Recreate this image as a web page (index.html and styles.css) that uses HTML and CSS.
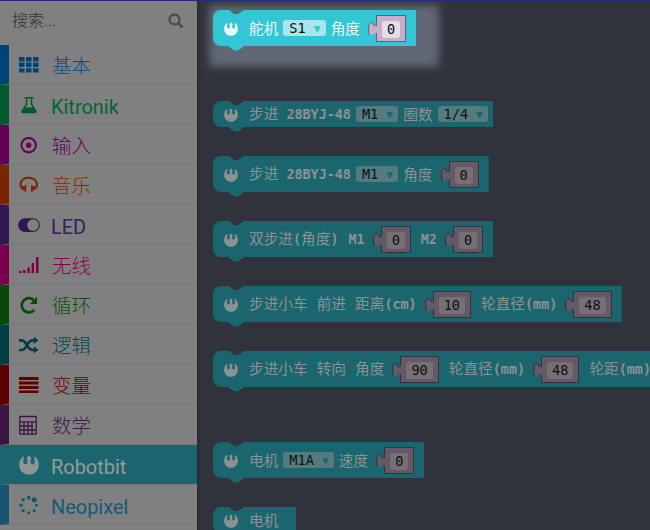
FILE: index.html
```
<!DOCTYPE html>
<html lang="zh-CN">
<head>
<meta charset="utf-8">
<title>Robotbit</title>
<link rel="stylesheet" href="styles.css">
</head>
<body>
<svg class="defs" width="0" height="0">
  <symbol id="rebel" viewBox="0 0 20 20"><path d="M4.600 1.200C1.500 3.200 .2 6.500 .2 10C.2 15.500 4.500 19.700 10 19.700S19.800 15.500 19.800 10C19.800 6.500 18.500 3.200 15.400 1.200C14.300 3.200 16.500 5.500 15.600 8C14.800 9.800 12.300 9.800 11.800 8C11.500 6.800 11.700 5 11.800 3.700L13.200 4.300L10 .2L6.800 4.300L8.200 3.700C8.300 5 8.500 6.800 8.200 8C7.700 9.800 5.200 9.800 4.400 8C3.500 5.500 5.700 3.200 4.600 1.200Z"/></symbol>
  <symbol id="notch" viewBox="0 0 16 5"><path d="M0 0H16L11 4Q10.500 4.400 9.800 4.400H6.800Q6 4.400 5.500 4Z"/></symbol>
  <symbol id="tab" viewBox="0 0 10 16"><path d="M10 4.500H7.500Q5.500 4.500 5 2.800Q4.300 .8 2.500 1.600Q.5 2.600 .5 7.800Q.5 13.200 2.200 14.200Q4 14.900 5 13.200Q5.500 12 7.500 12H10Z" stroke="none"/><path d="M9 4.500H7.500Q5.500 4.500 5 2.800Q4.300 .8 2.500 1.600Q.5 2.600 .5 7.800Q.5 13.200 2.200 14.200" fill="none"/></symbol>
</svg>
<div class="app">
  <nav class="toolbox">
    <div class="search"><span>搜索...</span>
      <svg width="16" height="16" viewBox="0 0 16 16"><circle cx="6.500" cy="6.500" r="5" fill="none" stroke="currentColor" stroke-width="2.300"/><path d="M10.200 10.200L14.500 14.500" stroke="currentColor" stroke-width="2.600"/></svg>
    </div>
    <div class="cat basic"><svg viewBox="0 0 20 20"><path d="M0 2h5.500v4.400H0zM7 2h5.500v4.400H7zM14 2h5.500v4.400H14zM0 7.600h5.500V12H0zM7 7.600h5.500V12H7zM14 7.600h5.500V12H14zM0 13.200h5.500v4.300H0zM7 13.200h5.500v4.300H7zM14 13.200h5.500v4.300H14z"/></svg><span>基本</span></div>
    <div class="cat kitronik"><svg viewBox="0 0 20 20"><path fill-rule="evenodd" d="M5.500 2h9v1.400h-1.300V9l4.300 6.800Q18.500 18.300 16 18.300H4Q1.500 18.300 2.500 15.800L6.800 9V3.400H5.500ZM8.300 3.400V9.500L6.300 12.500H13.700L11.700 9.500V3.400Z"/></svg><span class="latin">Kitronik</span></div>
    <div class="cat input"><svg viewBox="0 0 20 20"><circle cx="9.700" cy="10.200" r="7.200" fill="none" stroke="currentColor" stroke-width="2.100"/><circle cx="9.700" cy="10.200" r="2.700"/></svg><span>输入</span></div>
    <div class="cat music"><svg viewBox="0 0 20 20"><path d="M3 13.500C-.8 8 3.500 2.800 9.700 2.800S20.300 8 16.500 13.500" fill="none" stroke="currentColor" stroke-width="2"/><path d="M7.300 9.800V17H6.100V16Q3 15.500 2.500 13Q3 10.700 6.100 10.700V9.800ZM12.100 9.800V17H13.300V16Q16.400 15.500 17 13Q16.400 10.700 13.300 10.700V9.800Z"/></svg><span>音乐</span></div>
    <div class="cat led"><svg class="wide" viewBox="0 0 22 20"><path fill-rule="evenodd" d="M7 3.200H15A6.900 6.900 0 0 1 15 17H7A6.900 6.900 0 0 1 7 3.200ZM15 4.300A5.800 5.800 0 1 0 15 15.900A5.800 5.800 0 1 0 15 4.300Z"/></svg><span class="latin">LED</span></div>
    <div class="cat radio"><svg viewBox="0 0 20 20"><path d="M0 16h2.500v2H0zM4 15h2.500v3H4zM8.300 12.500h2.500V18H8.300zM12.600 8h2.500v10h-2.500zM17 2h2.500v16H17z"/></svg><span>无线</span></div>
    <div class="cat loops"><svg viewBox="0 0 20 20"><path d="M15.200 15A7.100 7.100 0 1 1 14.600 5" fill="none" stroke="currentColor" stroke-width="2.700"/><path d="M18 1.800V9H10.800Z"/></svg><span>循环</span></div>
    <div class="cat logic"><svg viewBox="0 0 20 20"><path d="M0 5.300H2.500C8 5.300 8 15 13.500 15H16M0 15H2.500C8 15 8 5.300 13.500 5.300H16" fill="none" stroke="currentColor" stroke-width="2.700"/><path d="M14.800 1.800L19.500 5.300L14.800 9ZM14.800 11.300L19.500 15L14.800 18.500Z"/></svg><span>逻辑</span></div>
    <div class="cat variables"><svg viewBox="0 0 20 20"><path d="M0 2h19.500v3H0zM0 6.500h19.500v3H0zM0 11h19.500v3H0zM0 15.500h19.500v2.500H0z"/></svg><span>变量</span></div>
    <div class="cat math"><svg viewBox="0 0 20 20"><path d="M.8 1.500H17.200V19.200H.8ZM1 6.800H17M1 11H14M1 15H17M5 7V19M9 7V19M13 7V19" fill="none" stroke="currentColor" stroke-width="1.300"/></svg><span>数学</span></div>
    <div class="cat robotbit"><svg><use href="#rebel"/></svg><span class="latin">Robotbit</span></div>
    <div class="cat neopixel"><svg viewBox="0 0 20 20"><circle cx="9.700" cy="2.700" r="2"/><circle cx="15.200" cy="4.800" r="2.500"/><circle cx="17.500" cy="10.200" r="1.500"/><circle cx="15.200" cy="15.700" r="1.600"/><circle cx="9.700" cy="17.800" r="1.500"/><circle cx="4.200" cy="15.700" r="1.700"/><circle cx="2" cy="10.200" r="1.600"/><circle cx="4.200" cy="4.800" r="1.800"/></svg><span class="latin">Neopixel</span></div>
  </nav>
  <main class="flyout">
    <div class="glow"></div>
    <div class="block lit"><svg class="emblem"><use href="#rebel"/></svg><span class="label">舵机</span><span class="drop"><b>S1</b><i>▼</i></span><span class="label">角度</span><span class="num"><svg><use href="#tab"/></svg><b>0</b></span><svg class="foot"><use href="#notch"/></svg></div>
    <div class="block low apart"><svg class="emblem"><use href="#rebel"/></svg><span class="label">步进<em> 28BYJ-48</em></span><span class="drop"><b>M1</b><i>▼</i></span><span class="label">圈数</span><span class="drop"><b>1/4</b><i>▼</i></span><svg class="foot"><use href="#notch"/></svg></div>
    <div class="block"><svg class="emblem"><use href="#rebel"/></svg><span class="label">步进<em> 28BYJ-48</em></span><span class="drop"><b>M1</b><i>▼</i></span><span class="label">角度</span><span class="num"><svg><use href="#tab"/></svg><b>0</b></span><svg class="foot"><use href="#notch"/></svg></div>
    <div class="block"><svg class="emblem"><use href="#rebel"/></svg><span class="label roomy">双步进<em>(</em>角度<em>) M1</em></span><span class="num"><svg><use href="#tab"/></svg><b>0</b></span><span class="label"><em>M2</em></span><span class="num"><svg><use href="#tab"/></svg><b>0</b></span><svg class="foot"><use href="#notch"/></svg></div>
    <div class="block"><svg class="emblem"><use href="#rebel"/></svg><span class="label spaced">步进小车<em> </em>前进<em> </em>距离<em>(cm)</em></span><span class="num"><svg><use href="#tab"/></svg><b>10</b></span><span class="label">轮直径<em>(mm)</em></span><span class="num"><svg><use href="#tab"/></svg><b>48</b></span><svg class="foot"><use href="#notch"/></svg></div>
    <div class="block clipped"><svg class="emblem"><use href="#rebel"/></svg><span class="label spaced">步进小车<em> </em>转向<em> </em>角度</span><span class="num"><svg><use href="#tab"/></svg><b>90</b></span><span class="label">轮直径<em>(mm)</em></span><span class="num"><svg><use href="#tab"/></svg><b>48</b></span><span class="label">轮距<em>(mm)</em></span><svg class="foot"><use href="#notch"/></svg></div>
    <div class="block apart"><svg class="emblem"><use href="#rebel"/></svg><span class="label">电机</span><span class="drop"><b>M1A</b><i>▼</i></span><span class="label">速度</span><span class="num"><svg><use href="#tab"/></svg><b>0</b></span><svg class="foot"><use href="#notch"/></svg></div>
    <div class="block low stub"><svg class="emblem"><use href="#rebel"/></svg><span class="label">电机</span></div>
  </main>
</div>
</body>
</html>
```
FILE: styles.css
```
* { box-sizing: border-box; }
body { margin: 0; overflow: hidden; background: #30333c; }
.defs { position: absolute; }
.app {
  display: flex;
  width: 650px;
  height: 530px;
  overflow: hidden;
  border-top: 1px solid #1f2d78;
}

/* toolbox */
.toolbox {
  flex: 0 0 197px;
  background: #808080;
  font-family: Roboto, "Noto Sans CJK SC", sans-serif;
  font-size: 19.5px;
  font-weight: 300;
}
.search {
  display: flex;
  align-items: center;
  justify-content: space-between;
  height: 44px;
  padding: 0 13px 5px 12px;
  font-size: 16px;
  color: #333;
}
.search span { padding-bottom: 3px; }
.search svg { color: #4c4c4c; }
.cat {
  display: flex;
  align-items: center;
  height: 40px;
  border-left: 9px solid var(--c);
  border-bottom: 1px solid #757575;
  padding-left: 10px;
  color: var(--c);
}
.cat svg { width: 20px; height: 20px; margin-right: 13px; fill: currentColor; }
.cat svg.wide { width: 22px; margin: 0 12px 0 -1px; }
.cat span { line-height: 36px; padding-top: 4px; color: var(--t, var(--c)); }
.cat .latin { margin-left: -1px; font-size: 19.950px; font-weight: 400; }
.basic { --c: #004375; --t: #0a4c88; }
.kitronik { --c: #005a2d; --t: #046636; }
.input { --c: #660057; --t: #6d005e; }
.music { --c: #7a2400; --t: #8a2c00; }
.led { --c: #311852; --t: #371d60; }
.radio { --c: #7b004b; --t: #860052; }
.loops { --c: #084808; --t: #0a500a; }
.logic { --c: #003e44; --t: #004850; }
.variables { --c: #5c0000; --t: #6e0000; }
.math { --c: #3b1542; --t: #441b50; }
.robotbit { --c: #1b666e; --t: #969a9a; background: #1b666e; color: #8d9595; }
.neopixel { --c: #175470; --t: #175a78; }

/* flyout */
.flyout {
  position: relative;
  flex: 1;
  min-width: 0;
  overflow: hidden;
  padding: 9px 0 0 16px;
  background: linear-gradient(90deg, #292c33, #30333c 4px);
}
.glow {
  position: absolute;
  left: 12px;
  top: 4px;
  width: 230px;
  height: 62px;
  background: #616775;
  filter: blur(4px);
}
.block {
  --fill: #1b666e;
  --ink: #8c9292;
  --field: #557b80;
  --num: #665967;
  --pill: #767076;
  --line: #33313a;
  position: relative;
  display: flex;
  align-items: center;
  width: max-content;
  height: 36px;
  margin-bottom: 29px;
  padding: 0 5px 0 11px;
  background: var(--fill);
  border-radius: 8px 0 0 8px;
  color: var(--ink);
  font: 400 14.670px/20px "Noto Sans CJK SC", sans-serif;
  clip-path: polygon(0 0, 16px 0, 21px 4px, 25px 4px, 31px 0, 100% 0, 100% 36px, 40px 36px, 40px 45px, 0 45px);
}
.lit {
  --fill: #33c7d6;
  --ink: #effcfd;
  --field: #a9e6ec;
  --num: #c7aecb;
  --pill: #e5dce7;
  --line: #675d70;
}
.low {
  height: 26px;
  clip-path: polygon(0 0, 16px 0, 21px 4px, 25px 4px, 31px 0, 100% 0, 100% 26px, 40px 26px, 40px 35px, 0 35px);
}
.apart { margin-top: 55px; }
.stub { padding-right: 18px; }
.clipped { width: 437px; }
.emblem { flex: none; width: 14px; height: 14px; margin: 2px 11px 0 0; fill: var(--ink); }
.foot { position: absolute; left: 15px; top: 100%; width: 16px; height: 5px; fill: var(--fill); }
.label { flex: none; white-space: pre; }
.label em { font: 700 13.400px/20px "DejaVu Sans Mono", monospace; }
.spaced { word-spacing: 1px; }
.roomy { word-spacing: 2px; }
.drop {
  display: flex;
  align-items: center;
  height: 16px;
  margin: 0 5px;
  padding: 0 5px 0 6px;
  background: var(--field);
  border-radius: 3px;
}
.drop b, .num b {
  font: 400 13.600px/17px "DejaVu Sans Mono", monospace;
  color: #0b1012;
}
.drop b { padding-top: 1px; }
.drop i { margin: 1px 0 0 8px; font: normal 9px/16px "DejaVu Sans", sans-serif; color: var(--fill); }
.drop:nth-last-child(2) { margin-right: 0; }
.num {
  position: relative;
  flex: none;
  display: flex;
  align-items: center;
  height: 27px;
  margin: 1px 10px 0 16px;
  padding: 1px 5px 0;
  background: var(--num);
  border: 1px solid var(--line);
}
.num:nth-last-child(2) { margin-right: 5px; }
.num svg {
  position: absolute;
  left: -9px;
  top: 5px;
  width: 10px;
  height: 16px;
  fill: var(--num);
  stroke: var(--line);
  stroke-width: 1;
}
.num b { padding: 0 5px; border-radius: 3px; background: var(--pill); }
```
